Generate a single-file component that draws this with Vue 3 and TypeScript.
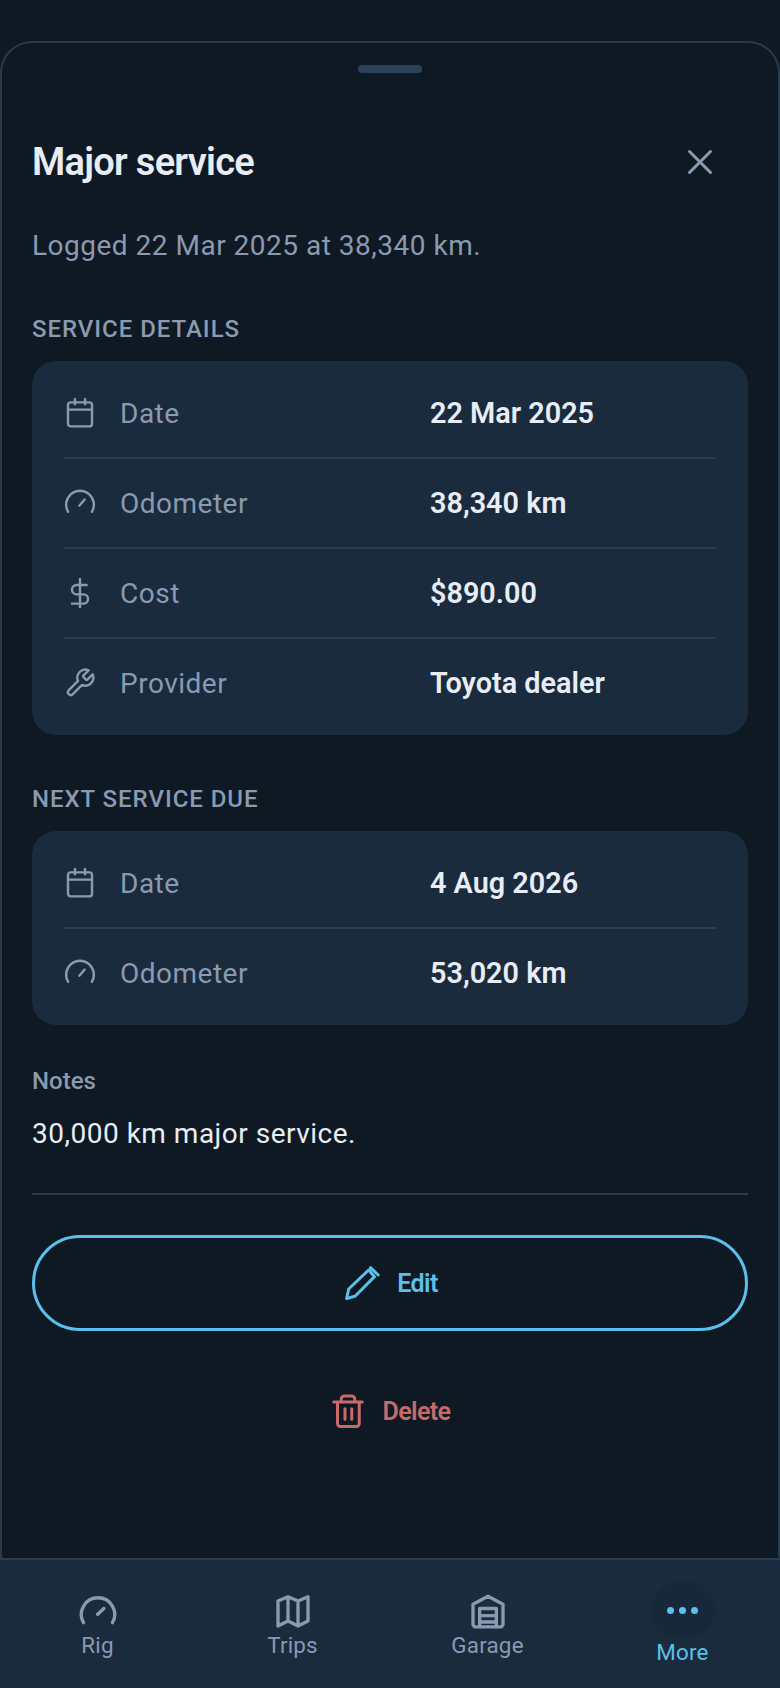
<script setup lang="ts">
const details = [
  { icon: 'cal', label: 'Date', value: '22 Mar 2025' },
  { icon: 'gauge', label: 'Odometer', value: '38,340 km' },
  { icon: 'dollar', label: 'Cost', value: '$890.00' },
  { icon: 'wrench', label: 'Provider', value: 'Toyota dealer' },
]
const next = [
  { icon: 'cal', label: 'Date', value: '4 Aug 2026' },
  { icon: 'gauge', label: 'Odometer', value: '53,020 km' },
]
const sections = [
  { title: 'SERVICE DETAILS', rows: details },
  { title: 'NEXT SERVICE DUE', rows: next },
]
</script>

<template>
  <div class="page">
    <div class="sheet">
      <div class="handle"></div>
      <div class="head">
        <h1>Major service</h1>
        <svg class="close" viewBox="0 0 24 24" width="36" height="36"><path d="M5 5l14 14M19 5L5 19" /></svg>
      </div>
      <p class="sub">Logged 22 Mar 2025 at 38,340 km.</p>
      <section v-for="s in sections" :key="s.title" class="section">
        <h2>{{ s.title }}</h2>
        <div class="card">
          <div v-for="r in s.rows" :key="r.label" class="row">
            <svg class="ri" viewBox="0 0 24 24" width="32" height="32">
              <template v-if="r.icon === 'cal'">
                <rect x="3" y="4" width="18" height="18" rx="2" /><path d="M3 9.5h18M8.2 1.5v4M15.8 1.5v4" />
              </template>
              <template v-else-if="r.icon === 'gauge'">
                <path d="M3.1 18.6A10.4 10.4 0 1 1 20.9 18.6" /><path d="M11.5 14l4-4.6" />
              </template>
              <template v-else-if="r.icon === 'dollar'">
                <path d="M12 1.5v21M17 6H9.5a3.5 3.5 0 0 0 0 7h5a3.5 3.5 0 0 1 0 7H6" />
              </template>
              <template v-else>
                <path d="M14.7 6.3a1 1 0 0 0 0 1.4l1.6 1.6a1 1 0 0 0 1.4 0l3.77-3.77a6 6 0 0 1-7.94 7.94l-6.91 6.91a2.12 2.12 0 0 1-3-3l6.91-6.91a6 6 0 0 1 7.94-7.94l-3.76 3.76z" />
              </template>
            </svg>
            <span class="label">{{ r.label }}</span>
            <span class="value">{{ r.value }}</span>
          </div>
        </div>
      </section>
      <div class="notes-label">Notes</div>
      <p class="notes">30,000 km major service.</p>
      <div class="divider"></div>
      <button class="edit">
        <svg viewBox="0 0 24 24" width="40" height="40"><path d="M2.8 21.4L4 15.6 16 4.2l3.5 4L8 19.8zM17.1 2.8l4.6 4.4" /></svg>
        <span>Edit</span>
      </button>
      <button class="delete">
        <svg viewBox="0 0 24 24" width="36" height="36"><path d="M2.5 6h19M7.5 6V4a2 2 0 0 1 2-2h5a2 2 0 0 1 2 2v2M5 6v14.3a2 2 0 0 0 2 2h10.5a2 2 0 0 0 2-2V6M10 10.5v7M14.5 10.5v7" /></svg>
        <span>Delete</span>
      </button>
    </div>
    <nav class="tabs">
      <div class="tab">
        <svg viewBox="0 0 24 24" width="40" height="40"><path d="M3.3 19a10 10 0 1 1 17.4 0M11.8 14l3.7-3.5" /></svg>
        <span>Rig</span>
      </div>
      <div class="tab">
        <svg viewBox="0 0 24 24" width="40" height="40"><path d="M3 6l6-2.5L15 6l6-2.5V18l-6 3-6-3-6 3zM9 3.5V18M15 6v15" /></svg>
        <span>Trips</span>
      </div>
      <div class="tab">
        <svg viewBox="0 0 24 24" width="40" height="40"><path d="M3 8L12 3.2 21 8V20a1.5 1.5 0 0 1-1.5 1.5h-15A1.5 1.5 0 0 1 3 20zM7 21.5V10.5h10v11M7 14.8h10M7 18.6h10" /></svg>
        <span>Garage</span>
      </div>
      <div class="tab active">
        <div class="pill"><i></i><i></i><i></i></div>
        <span>More</span>
      </div>
    </nav>
  </div>
</template>

<style>
html, body { margin: 0; background: #0f1923; }
</style>

<style scoped>
.page {
  width: 780px; height: 1688px; display: flex; flex-direction: column;
  background: #0f1923; font-family: Roboto, sans-serif; overflow: hidden;
  padding-top: 41px; box-sizing: border-box;
}
.sheet {
  flex: 1; min-height: 0; box-sizing: border-box; border: 2px solid #2a3a4e; border-bottom: 0;
  border-radius: 32px 32px 0 0; padding: 22px 30px 0; display: flex; flex-direction: column;
}
.handle { width: 64px; height: 8px; border-radius: 4px; background: #2d4258; align-self: center; flex: none; }
.head { display: flex; justify-content: space-between; align-items: center; margin-top: 67px; height: 44px; }
h1 { margin: 0; font-size: 38px; font-weight: 600; color: #e8edf5; letter-spacing: -0.7px; }
.close { margin-right: 30px; }
.close path { fill: none; stroke: #8a9ab0; stroke-width: 2; stroke-linecap: round; }
.sub { margin: 45px 0 0; font-size: 28px; line-height: 34px; color: #8a9ab0; letter-spacing: 0.5px; }
.section { margin-top: 50px; }
.section + .section { margin-top: 48px; }
h2 { margin: 0 0 16px; font-size: 24px; line-height: 32px; font-weight: 500; color: #8a9ab0; letter-spacing: 0.96px; }
.card { background: #1a2b3e; border-radius: 24px; padding: 8px 32px; }
.row { display: grid; grid-template-columns: 32px 1fr 286px; align-items: center; column-gap: 24px; height: 88px; }
.row + .row { border-top: 2px solid #2a3d52; }
.ri { fill: none; stroke: #8a9ab0; stroke-width: 1.8; stroke-linecap: round; stroke-linejoin: round; }
.label { font-size: 28px; color: #8a9ab0; letter-spacing: 0.5px; }
.value { font-size: 28.8px; font-weight: 600; color: #e8edf5; }
.notes-label { margin-top: 40px; font-size: 24px; font-weight: 500; color: #8a9ab0; line-height: 32px; }
.notes { margin: 19px 0 0; font-size: 28px; line-height: 36px; color: #e8edf5; letter-spacing: 0.5px; }
.divider { height: 2px; background: #2a3a4e; margin-top: 41px; flex: none; }
button { background: none; font-family: inherit; display: flex; align-items: center; justify-content: center; border: 0; padding: 0; flex: none; }
.edit { margin-top: 40px; height: 96px; gap: 15px; border: 3px solid #5bc0eb; border-radius: 48px; color: #5bc0eb; font-size: 25px; letter-spacing: -0.6px; font-weight: 600; box-sizing: border-box; }
.edit svg { fill: none; stroke: #5bc0eb; stroke-width: 1.8; stroke-linecap: round; stroke-linejoin: round; }
.delete { margin-top: 44px; height: 72px; gap: 17px; color: #c96a6a; font-size: 25px; letter-spacing: -0.6px; font-weight: 600; }
.delete svg { fill: none; stroke: #c96a6a; stroke-width: 2; stroke-linecap: round; stroke-linejoin: round; }
.tabs { height: 130px; flex: none; background: #1a2b3e; border-top: 2px solid #2a3d52; box-sizing: border-box; display: grid; grid-template-columns: repeat(4, 1fr); }
.tab { display: flex; flex-direction: column; align-items: center; padding-top: 31px; color: #8a9ab0; font-size: 22.4px; line-height: 28px; letter-spacing: 0.2px; }
.tab svg { fill: none; stroke: #8a9ab0; stroke-width: 2; stroke-linecap: round; stroke-linejoin: round; }
.tab.active { color: #5bc0eb; padding-top: 22px; }
.pill { width: 64px; height: 56px; border-radius: 28px; background: #17283b; display: flex; align-items: center; justify-content: center; gap: 5px; }
.pill i { width: 7px; height: 7px; border-radius: 50%; background: #5bc0eb; }
</style>
